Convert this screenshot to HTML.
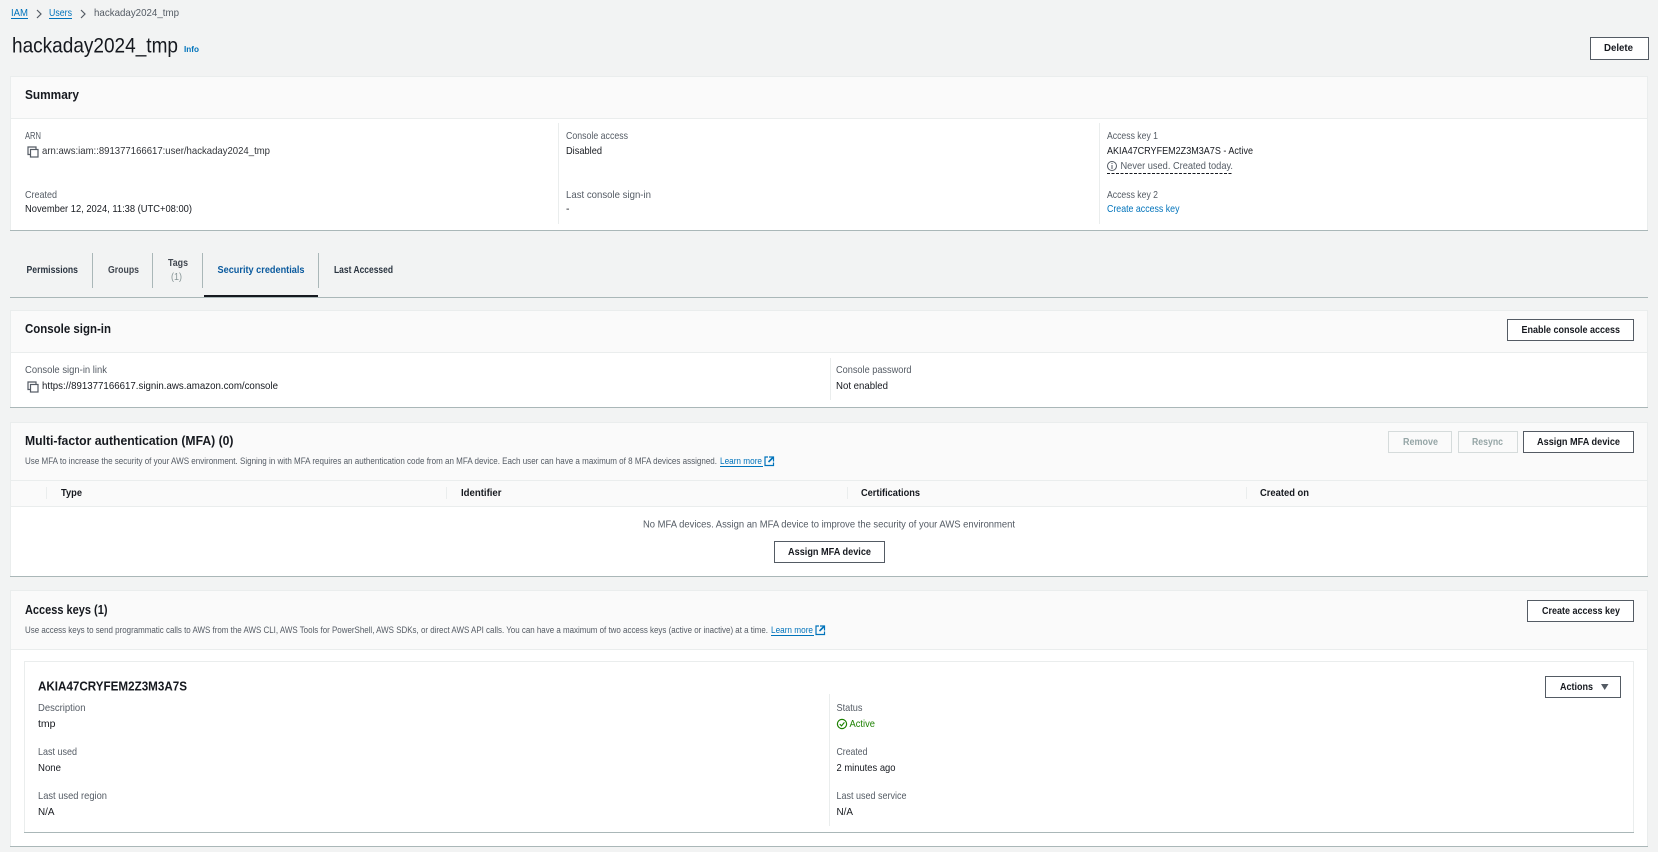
<!DOCTYPE html>
<html lang="en"><head><meta charset="utf-8"><title>hackaday2024_tmp</title>
<style>
html,body{margin:0;padding:0;background:#f2f3f3;width:1658px;height:852px;overflow:hidden}
svg{display:block;font-family:"Liberation Sans",sans-serif;font-size:10.5px}
text{transform:translateY(-1px)}
text.n{transform:none}
.l{fill:#545b64}.v{fill:#16191f}.a{fill:#0073bb}
.b{font-weight:700;fill:#16191f}
.h{font-weight:700;fill:#16191f;font-size:13px}
.btn{fill:#fff;stroke:#545b64;stroke-width:1}
.dis{fill:#fafafa;stroke:#d5dbdb;stroke-width:1}
.ln{stroke:#eaeded;stroke-width:1}
</style></head><body>
<svg width="1658" height="852" viewBox="0 0 1658 852" xmlns="http://www.w3.org/2000/svg">
<defs>
<g id="copy" fill="none" stroke="#545b64" stroke-width="1.2"><path d="M3.5 8.5H1V1H9V3"/><rect x="3.5" y="3.5" width="7.5" height="7.5" fill="#fff"/></g>
<g id="ext" fill="none" stroke="#0073bb" stroke-width="1.2"><path d="M4 1H1V9.5H9.5V6.5"/><path d="M5 1H9.5V5.5" /><path d="M9 1.5L4.5 6" stroke-width="1.6"/></g>
</defs>
<rect width="1658" height="852" fill="#f2f3f3"/>

<!-- breadcrumb -->
<text x="11" y="17" class="a" textLength="17" lengthAdjust="spacingAndGlyphs">IAM</text>
<rect x="11" y="18" width="17" height="1" fill="#0073bb"/>
<path d="M37 10L41 14L37 18" fill="none" stroke="#545b64" stroke-width="1.2"/>
<text x="49" y="17" class="a" textLength="23" lengthAdjust="spacingAndGlyphs">Users</text>
<rect x="49" y="18" width="23" height="1" fill="#0073bb"/>
<path d="M81 10L85 14L81 18" fill="none" stroke="#545b64" stroke-width="1.2"/>
<text x="94" y="17" fill="#545b64" textLength="85" lengthAdjust="spacingAndGlyphs">hackaday2024_tmp</text>

<!-- title -->
<text x="12" y="52.5" fill="#16191f" class="n" style="font-size:21px" textLength="166" lengthAdjust="spacingAndGlyphs">hackaday2024_tmp</text>
<text x="184" y="52" class="a n" style="font-size:8.5px;font-weight:700" textLength="15" lengthAdjust="spacingAndGlyphs">Info</text>
<rect x="1590.5" y="37.5" width="58" height="22" class="btn"/>
<text x="1604" y="52" class="b" textLength="29" lengthAdjust="spacingAndGlyphs">Delete</text>

<!-- Summary -->
<rect x="10" y="76" width="1638" height="155" fill="#fff"/>
<rect x="10" y="76" width="1638" height="42" fill="#fafafa"/>
<rect x="10" y="76" width="1638" height="1" fill="#eaeded"/>
<rect x="10" y="118" width="1638" height="1" fill="#eaeded"/>
<rect x="10" y="76" width="1" height="155" fill="#eaeded"/>
<rect x="1647" y="76" width="1" height="155" fill="#eaeded"/>
<rect x="10" y="230" width="1638" height="1" fill="#aab7b8"/>
<text x="25" y="99" class="h n" textLength="54" lengthAdjust="spacingAndGlyphs">Summary</text>
<text x="25" y="140" class="l" textLength="16" lengthAdjust="spacingAndGlyphs">ARN</text>
<use href="#copy" x="27" y="146"/>
<text x="42" y="155" class="v" fill-opacity=".9" textLength="228" lengthAdjust="spacingAndGlyphs">arn:aws:iam::891377166617:user/hackaday2024_tmp</text>
<text x="25" y="199" class="l" textLength="32" lengthAdjust="spacingAndGlyphs">Created</text>
<text x="25" y="213" class="v" textLength="167" lengthAdjust="spacingAndGlyphs">November 12, 2024, 11:38 (UTC+08:00)</text>
<line x1="558.5" y1="123" x2="558.5" y2="224" class="ln"/>
<text x="566" y="140" class="l" textLength="62" lengthAdjust="spacingAndGlyphs">Console access</text>
<text x="566" y="155" class="v" textLength="36" lengthAdjust="spacingAndGlyphs">Disabled</text>
<text x="566" y="199" class="l" textLength="85" lengthAdjust="spacingAndGlyphs">Last console sign-in</text>
<text x="566" y="213" class="v">-</text>
<line x1="1099.5" y1="123" x2="1099.5" y2="224" class="ln"/>
<text x="1107" y="140" class="l" textLength="51" lengthAdjust="spacingAndGlyphs">Access key 1</text>
<text x="1107" y="155" class="v" textLength="146" lengthAdjust="spacingAndGlyphs">AKIA47CRYFEM2Z3M3A7S - Active</text>
<circle cx="1112" cy="166" r="4.5" fill="none" stroke="#545b64" stroke-width="1"/>
<path d="M1112 165V169M1112 163V164" stroke="#545b64" stroke-width="1" fill="none"/>
<text x="1120.5" y="170" class="l" textLength="112.5" lengthAdjust="spacingAndGlyphs">Never used. Created today.</text>
<line x1="1107" y1="173.5" x2="1233" y2="173.5" stroke="#16191f" stroke-width="1" stroke-dasharray="3 1.5"/>
<text x="1107" y="199" class="l" textLength="51" lengthAdjust="spacingAndGlyphs">Access key 2</text>
<text x="1107" y="213" class="a" textLength="72.5" lengthAdjust="spacingAndGlyphs">Create access key</text>

<!-- Tabs -->
<rect x="10" y="297" width="1638" height="1" fill="#aab7b8"/>
<g stroke="#aab7b8"><line x1="92.5" y1="253" x2="92.5" y2="288"/><line x1="152.5" y1="253" x2="152.5" y2="288"/><line x1="202.5" y1="253" x2="202.5" y2="288"/><line x1="318.5" y1="253" x2="318.5" y2="288"/></g>
<rect x="204" y="295" width="114" height="2" fill="#16191f"/>
<text x="26.5" y="274" class="b" textLength="51.5" lengthAdjust="spacingAndGlyphs" style="fill:#2a3440">Permissions</text>
<text x="108" y="274" class="b" textLength="31" lengthAdjust="spacingAndGlyphs" style="fill:#414750">Groups</text>
<text x="168" y="267" class="b" textLength="20" lengthAdjust="spacingAndGlyphs" style="fill:#414750">Tags</text>
<text x="171" y="281" fill="#879596" textLength="11" lengthAdjust="spacingAndGlyphs">(1)</text>
<text x="217.5" y="274" class="b" textLength="87" lengthAdjust="spacingAndGlyphs" style="fill:#0a5a9e">Security credentials</text>
<text x="334" y="274" class="b" textLength="59" lengthAdjust="spacingAndGlyphs" style="fill:#2a3440">Last Accessed</text>

<!-- Console sign-in -->
<rect x="10" y="310" width="1638" height="98" fill="#fff"/>
<rect x="10" y="310" width="1638" height="42" fill="#fafafa"/>
<rect x="10" y="310" width="1638" height="1" fill="#eaeded"/>
<rect x="10" y="352" width="1638" height="1" fill="#eaeded"/>
<rect x="10" y="310" width="1" height="98" fill="#eaeded"/>
<rect x="1647" y="310" width="1" height="98" fill="#eaeded"/>
<rect x="10" y="407" width="1638" height="1" fill="#aab7b8"/>
<text x="25" y="334" class="h" textLength="86" lengthAdjust="spacingAndGlyphs">Console sign-in</text>
<rect x="1507.5" y="319.5" width="126" height="21" class="btn"/>
<text x="1521.5" y="334" class="b" textLength="98.5" lengthAdjust="spacingAndGlyphs">Enable console access</text>
<text x="25" y="374" class="l" textLength="82" lengthAdjust="spacingAndGlyphs">Console sign-in link</text>
<use href="#copy" x="27" y="381"/>
<text x="42" y="390" class="v" textLength="236" lengthAdjust="spacingAndGlyphs">https://891377166617.signin.aws.amazon.com/console</text>
<line x1="830.5" y1="358" x2="830.5" y2="400" class="ln"/>
<text x="836" y="374" class="l" textLength="75.5" lengthAdjust="spacingAndGlyphs">Console password</text>
<text x="836" y="390" class="v" textLength="52" lengthAdjust="spacingAndGlyphs">Not enabled</text>

<!-- MFA -->
<rect x="10" y="422" width="1638" height="155" fill="#fff"/>
<rect x="10" y="422" width="1638" height="85" fill="#fafafa"/>
<rect x="10" y="422" width="1638" height="1" fill="#eaeded"/>
<rect x="10" y="480" width="1638" height="1" fill="#eaeded"/>
<rect x="10" y="506" width="1638" height="1" fill="#eaeded"/>
<rect x="10" y="422" width="1" height="155" fill="#eaeded"/>
<rect x="1647" y="422" width="1" height="155" fill="#eaeded"/>
<rect x="10" y="576" width="1638" height="1" fill="#aab7b8"/>
<text x="25" y="446" class="h" textLength="208.5" lengthAdjust="spacingAndGlyphs">Multi-factor authentication (MFA) (0)</text>
<text x="25" y="465" class="l" style="font-size:9px" textLength="692" lengthAdjust="spacingAndGlyphs">Use MFA to increase the security of your AWS environment. Signing in with MFA requires an authentication code from an MFA device. Each user can have a maximum of 8 MFA devices assigned.</text>
<text x="720" y="465" class="a" style="font-size:9px" textLength="42" lengthAdjust="spacingAndGlyphs">Learn more</text>
<rect x="720" y="466" width="43" height="1" fill="#0073bb"/>
<use href="#ext" x="764" y="456"/>
<rect x="1388.5" y="431.5" width="63" height="21" class="dis"/>
<text x="1403" y="446" style="font-weight:700;fill:#95a5a6" textLength="35" lengthAdjust="spacingAndGlyphs">Remove</text>
<rect x="1458.5" y="431.5" width="59" height="21" class="dis"/>
<text x="1472" y="446" style="font-weight:700;fill:#95a5a6" textLength="31" lengthAdjust="spacingAndGlyphs">Resync</text>
<rect x="1523.5" y="431.5" width="110" height="21" class="btn"/>
<text x="1537" y="446" class="b" textLength="83" lengthAdjust="spacingAndGlyphs">Assign MFA device</text>
<g class="ln"><line x1="46.5" y1="487" x2="46.5" y2="499"/><line x1="446.5" y1="487" x2="446.5" y2="499"/><line x1="847.5" y1="487" x2="847.5" y2="499"/><line x1="1246.5" y1="487" x2="1246.5" y2="499"/></g>
<text x="61" y="497" class="b" textLength="21" lengthAdjust="spacingAndGlyphs">Type</text>
<text x="461" y="497" class="b" textLength="40.5" lengthAdjust="spacingAndGlyphs">Identifier</text>
<text x="861" y="497" class="b" textLength="59" lengthAdjust="spacingAndGlyphs">Certifications</text>
<text x="1260" y="497" class="b" textLength="49" lengthAdjust="spacingAndGlyphs">Created on</text>
<rect x="10" y="507" width="1638" height="69" fill="#fff"/>
<rect x="10" y="507" width="1" height="69" fill="#eaeded"/>
<rect x="1647" y="507" width="1" height="69" fill="#eaeded"/>
<text x="643" y="528.5" class="l" textLength="372" lengthAdjust="spacingAndGlyphs">No MFA devices. Assign an MFA device to improve the security of your AWS environment</text>
<rect x="774.5" y="541.5" width="110" height="21" class="btn"/>
<text x="788" y="556" class="b" textLength="83" lengthAdjust="spacingAndGlyphs">Assign MFA device</text>

<!-- Access keys -->
<rect x="10" y="590" width="1638" height="257" fill="#fff"/>
<rect x="10" y="590" width="1638" height="59" fill="#fafafa"/>
<rect x="10" y="590" width="1638" height="1" fill="#eaeded"/>
<rect x="10" y="649" width="1638" height="1" fill="#eaeded"/>
<rect x="10" y="590" width="1" height="257" fill="#eaeded"/>
<rect x="1647" y="590" width="1" height="257" fill="#eaeded"/>
<rect x="10" y="846" width="1638" height="1" fill="#aab7b8"/>
<text x="25" y="615" class="h" textLength="82.5" lengthAdjust="spacingAndGlyphs">Access keys (1)</text>
<text x="25" y="634" class="l" style="font-size:9px" textLength="743" lengthAdjust="spacingAndGlyphs">Use access keys to send programmatic calls to AWS from the AWS CLI, AWS Tools for PowerShell, AWS SDKs, or direct AWS API calls. You can have a maximum of two access keys (active or inactive) at a time.</text>
<text x="771" y="634" class="a" style="font-size:9px" textLength="42" lengthAdjust="spacingAndGlyphs">Learn more</text>
<rect x="771" y="635" width="43" height="1" fill="#0073bb"/>
<use href="#ext" x="815" y="625"/>
<rect x="1527.5" y="600.5" width="106" height="21" class="btn"/>
<text x="1542" y="615" class="b" textLength="78" lengthAdjust="spacingAndGlyphs">Create access key</text>

<rect x="24.5" y="661.5" width="1609" height="171" fill="#fff" stroke="#eaeded"/>
<rect x="24" y="832" width="1610" height="1" fill="#aab7b8"/>
<text x="38" y="691.5" class="h" textLength="149" lengthAdjust="spacingAndGlyphs">AKIA47CRYFEM2Z3M3A7S</text>
<rect x="1545.5" y="676.5" width="75" height="21" class="btn"/>
<text x="1560" y="691" class="b" textLength="33" lengthAdjust="spacingAndGlyphs">Actions</text>
<path d="M1601 684H1608.5L1604.7 690Z" fill="#545b64"/>
<line x1="829.5" y1="694" x2="829.5" y2="826" class="ln"/>
<text x="38" y="712" class="l" textLength="47.5" lengthAdjust="spacingAndGlyphs">Description</text>
<text x="38" y="728" class="v" textLength="17.5" lengthAdjust="spacingAndGlyphs">tmp</text>
<text x="38" y="756" class="l" textLength="39" lengthAdjust="spacingAndGlyphs">Last used</text>
<text x="38" y="772" class="v" textLength="23" lengthAdjust="spacingAndGlyphs">None</text>
<text x="38" y="800" class="l" textLength="69" lengthAdjust="spacingAndGlyphs">Last used region</text>
<text x="38" y="816" class="v" textLength="16.5" lengthAdjust="spacingAndGlyphs">N/A</text>
<text x="836.5" y="712" class="l" textLength="26" lengthAdjust="spacingAndGlyphs">Status</text>
<circle cx="842" cy="724" r="4.6" fill="none" stroke="#1d8102" stroke-width="1.2"/>
<path d="M839.8 724.1L841.5 725.9L844.4 722.4" fill="none" stroke="#1d8102" stroke-width="1.1"/>
<text x="849.5" y="728" fill="#1d8102" textLength="25.5" lengthAdjust="spacingAndGlyphs">Active</text>
<text x="836.5" y="756" class="l" textLength="31" lengthAdjust="spacingAndGlyphs">Created</text>
<text x="836.5" y="772" class="v" textLength="59" lengthAdjust="spacingAndGlyphs">2 minutes ago</text>
<text x="836.5" y="800" class="l" textLength="70" lengthAdjust="spacingAndGlyphs">Last used service</text>
<text x="836.5" y="816" class="v" textLength="16.5" lengthAdjust="spacingAndGlyphs">N/A</text>
</svg>
</body></html>
